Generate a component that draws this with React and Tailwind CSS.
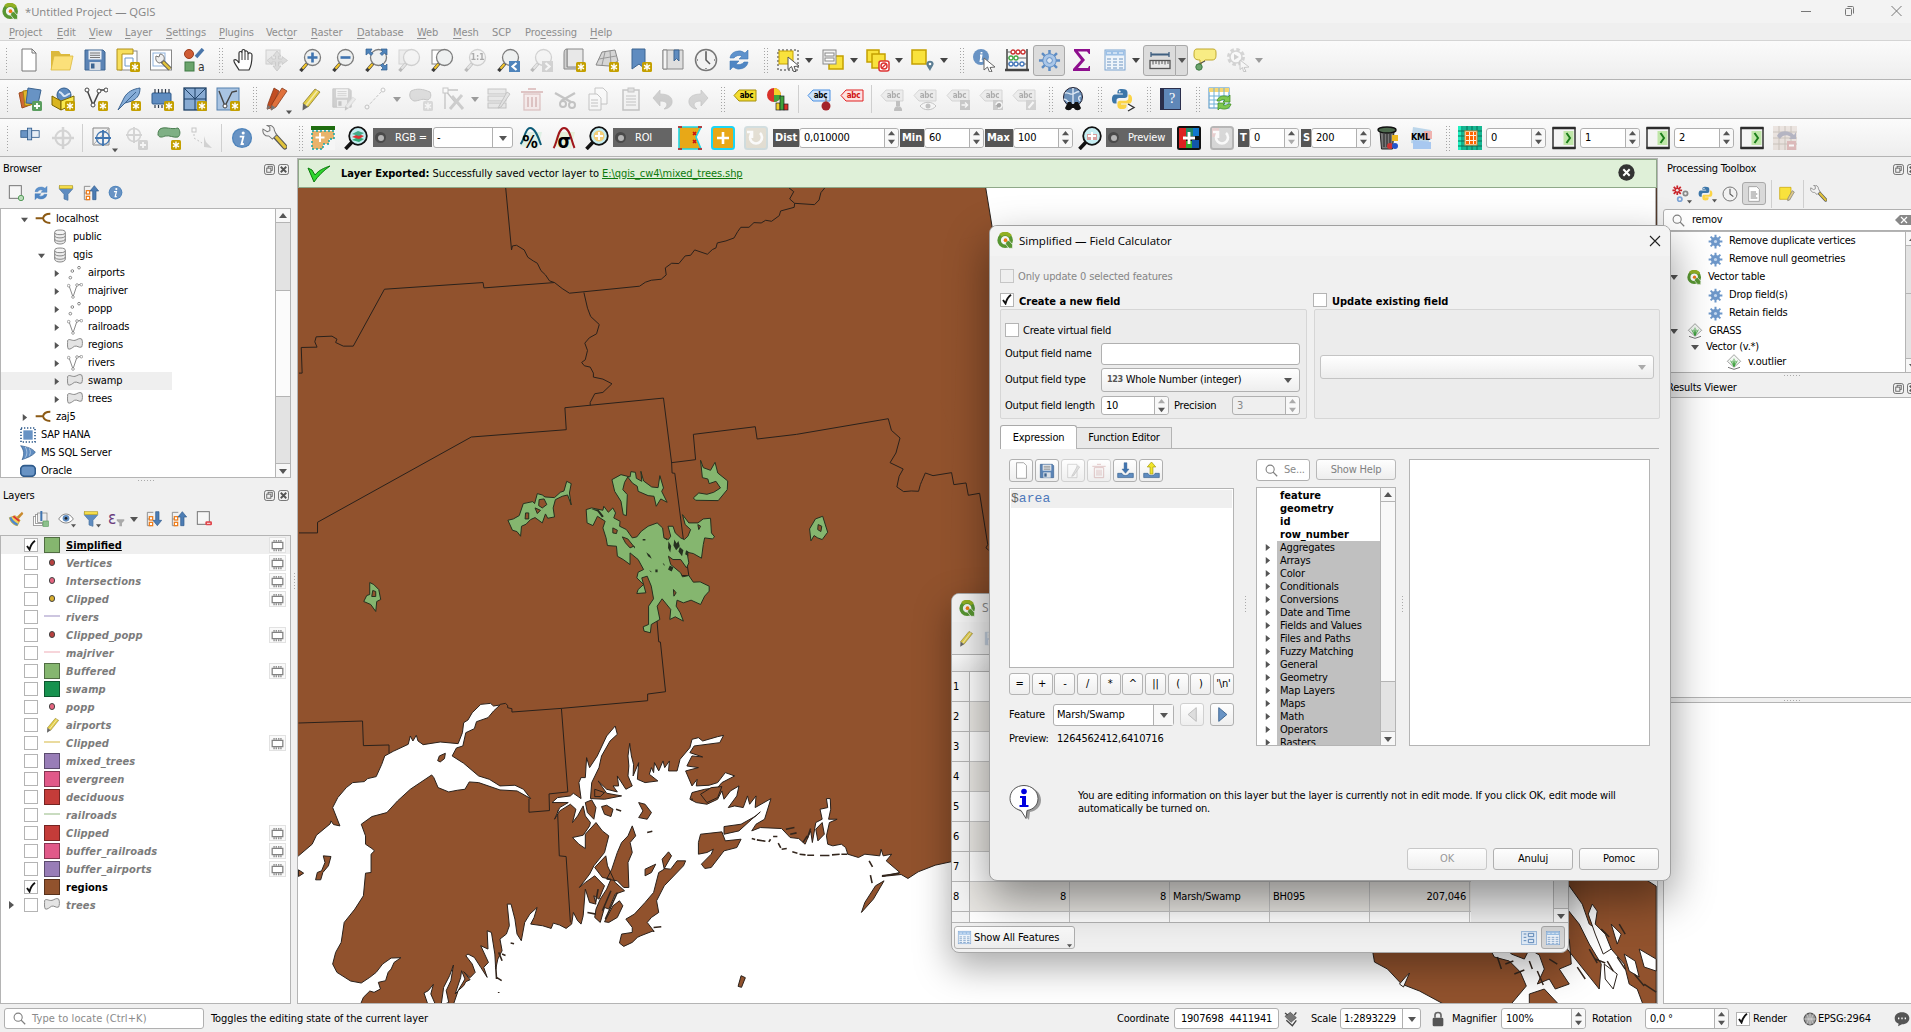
import React from "react";

/* ---------- primitives ---------- */
const Tri = ({ d = "down", c = "#555", s = 8 }) => {
  const p = { down: "0,2 8,2 4,7", up: "0,6 8,6 4,1", right: "2,0 7,4 2,8", left: "6,0 1,4 6,8" }[d];
  return <svg width={s} height={s} viewBox="0 0 8 8" className="shrink-0"><polygon points={p} fill={c} /></svg>;
};

const I = ({ children, s = 24, className = "" }) => (
  <svg width={s} height={s} viewBox="0 0 24 24" fill="none" className={"shrink-0 " + className}>{children}</svg>
);

const Cell = ({ children, off, menu }) => (
  <div className={"relative flex h-[31px] w-[33px] shrink-0 items-center justify-center " + (off ? "opacity-30 grayscale" : "")}>
    {children}
    {menu && <span className="absolute bottom-0 right-[1px]"><Tri s={6} /></span>}
  </div>
);
const Arr = ({ off }) => <div className={"flex w-3 shrink-0 items-center pl-[1px] " + (off ? "opacity-50" : "")}><Tri c="#444" /></div>;
const Handle = ({ w = "w-4" }) => (
  <div className={"flex shrink-0 justify-center pl-1 " + w}>
    <div className="h-[26px] w-[5px] bg-[radial-gradient(#a5a5a5_0.8px,transparent_1px)] bg-[length:3px_3px]" />
  </div>
);
const Sep = ({ w = "w-[7px]" }) => <div className={"flex shrink-0 justify-center " + w}><div className="h-[28px] w-px bg-[#cfcfcf]" /></div>;
const Dots = ({ v }) => <div className={(v ? "h-[18px] w-[3px]" : "h-[3px] w-[18px]") + " bg-[radial-gradient(#aaa_0.8px,transparent_1px)] bg-[length:3px_3px]"} />;

const Star = () => <g><rect x="14" y="14" width="10" height="10" rx="1.5" fill="#c4a000" /><path d="M19 15.5v7M16 17.2l6 3.6M22 17.2l-6 3.6" stroke="#fff" strokeWidth="1.4" /></g>;
const Plus = ({ c = "#5a9e5f" }) => <g><rect x="14" y="14" width="10" height="10" rx="1.5" fill={c} /><path d="M19 16v6M16 19h6" stroke="#fff" strokeWidth="1.8" /></g>;
const Mag = ({ children, fill = "#eef0f0" }) => (
  <g><path d="M9 15.5L2.5 23" stroke="#3c3c3c" strokeWidth="3.4" /><path d="M8.5 16L4.5 20.6" stroke="#f2c62e" strokeWidth="2.2" />
    <circle cx="14.5" cy="9.5" r="8" fill={fill} stroke="#7c7c7c" strokeWidth="1.3" />{children}</g>
);
const MagB = ({ children }) => (
  <g><path d="M9 15L1.5 23" stroke="#111" strokeWidth="3.6" /><circle cx="14" cy="10" r="8.8" fill="#c5edf2" stroke="#111" strokeWidth="1.8" />{children}</g>
);
const Q = ({ s = 16 }) => (
  <I s={s}><circle cx="11.5" cy="11.5" r="8.5" stroke="#589632" strokeWidth="5" /><path d="M5 5a9 9 0 0 1 14 1" stroke="#93b023" strokeWidth="5" /><path d="M13 13l4-1 5 6v5h-5l-5-6z" fill="#589632" stroke="#f3f3f3" strokeWidth="1" /><circle cx="12" cy="11.5" r="2.6" fill="#ee7913" /></I>
);
const Gear = ({ c = "#6d97c9", s = 24, hole = "#e8eef5", r = 3 }) => (
  <I s={s}><path d="M12 1v22M1 12h22M4.2 4.2l15.6 15.6M19.8 4.2L4.2 19.8" stroke={c} strokeWidth="3.2" /><circle cx="12" cy="12" r="7.4" fill={c} /><circle cx="12" cy="12" r={r} fill={hole} /></I>
);
const Refresh = ({ s = 24 }) => (
  <I s={s}><path d="M3 10a9 8 0 0 1 15-5l3-3v9h-9l3-3a6 5 0 0 0-8 2z" fill="#5e92cc" stroke="#4179b5" strokeWidth=".6" /><path d="M21 14a9 8 0 0 1-15 5l-3 3v-9h9l-3 3a6 5 0 0 0 8-2z" fill="#4f86c4" stroke="#4179b5" strokeWidth=".6" /></I>
);
const Info = ({ s = 24 }) => <I s={s}><circle cx="12" cy="12" r="11" fill="#4f84bb" /><circle cx="12" cy="12" r="9.6" fill="#6893c4" /><circle cx="13.3" cy="6.5" r="1.7" fill="#fff" /><path d="M9.5 10.5h4l-2 8h2.5" stroke="#fff" strokeWidth="2" /></I>;
const Wrench = ({ s = 24 }) => <I s={s}><path d="M11 9l11 12" stroke="#555" strokeWidth="5" strokeLinecap="round" /><path d="M14 12l8 9" stroke="#e0c23c" strokeWidth="3" strokeLinecap="round" /><path d="M1 4l4 2.500 2.500-1L7.500 2 5 .5c4-1 7 1.500 7 5l2 4-4 4-3.500-3C3 11 0 8 1 4z" fill="#f2f2f2" stroke="#777" strokeWidth="1" /></I>;
const Python = ({ s = 24 }) => <I s={s}><path d="M12 1c-5 0-5 2-5 5h6v1H4c-4 0-4 10 0 10h2v-3c0-2 1-3 3-3h6c2 0 3-1 3-3V5c0-3-2-4-6-4z" fill="#3c76a9" /><path d="M12 23c5 0 5-2 5-5h-6v-1h9c4 0 4-10 0-10h-1v4c0 2-1 3-3 3h-6c-2 0-3 1-3 3v2c0 3 2 4 5 4z" fill="#fbd446" /><circle cx="9.500" cy="3.800" r="1" fill="#fff" /></I>;
const Funnel = ({ s = 16 }) => <I s={s}><path d="M2 2h20v4l-7 8v9l-6-2v-7L2 6z" fill="#5f8cc0" stroke="#4a729f" /><rect x="2" y="1" width="20" height="4.500" fill="#f4dc4a" stroke="#b79c1a" strokeWidth=".8" /></I>;
const TreeArrow = ({ up }) => (
  <I s={16}><path d="M2 2h9M2 2v20h6M2 12h6" stroke="#8a8a8a" strokeWidth="1.400" /><rect x="5" y="8.500" width="5" height="5" fill="#fff" stroke="#ee7913" strokeWidth="1.800" /><rect x="5" y="17" width="5" height="5" fill="#fff" stroke="#ee7913" strokeWidth="1.800" />
    {up ? <path d="M17 1l6.500 8h-4v13h-5V9h-4z" fill="#4d7db4" stroke="#2f5b8c" /> : <path d="M17 22l6.500-8h-4V1h-5v13h-4z" fill="#4d7db4" stroke="#2f5b8c" />}</I>
);
const Pencil = ({ c = "#e4cf47", s = 24 }) => <I s={s}><path d="M17 2l5 3L10 20l-5-3.500z" fill={c} stroke="#8a7a30" strokeWidth=".8" /><path d="M5 16.500L10 20l-5.500 3.500z" fill="#666" /><path d="M19.500 3.500L8 18.500" stroke="#fff8" strokeWidth="1.500" /></I>;
const Floppy = ({ s = 24 }) => <I s={s}><path d="M2 2h18l2 2v18H2z" fill="#5a83b5" stroke="#3c6491" /><rect x="5.500" y="2.500" width="13" height="9" fill="#e9edf2" /><path d="M7 5h10M7 7.300h10M7 9.500h10" stroke="#777" strokeWidth="1" /><rect x="6.500" y="14" width="11" height="8" fill="#d9dee5" /><rect x="8" y="15.500" width="3.500" height="5" fill="#3c6491" /></I>;
const TableIc = ({ s = 24 }) => <I s={s}><rect x="2" y="2" width="20" height="20" fill="#eef4fa" stroke="#7ba3d0" /><rect x="2.500" y="2.500" width="19" height="5" fill="#9cc0e6" /><path d="M4 5h4M10 5h4M16 5h4" stroke="#fff" /><path d="M4 11h4M10 11h4M16 11h4M4 14h4M10 14h4M16 14h4M4 17h4M10 17h4M16 17h4M4 20h4M10 20h4M16 20h4" stroke="#6f96c2" strokeWidth="1.200" /></I>;
const Tag = ({ fill = "#f4dd2f", st = "#a58f0c", tc = "#222", children }) => (
  <div className="relative flex h-6 w-6 items-start justify-center">
    <svg width="24" height="24" viewBox="0 0 24 24" className="absolute left-0 top-0"><path d="M1 8.500L6 3h17v11H6z" fill={fill} stroke={st} />{children}</svg>
    <span className={"relative mt-[3px] pl-1 text-[8px] font-bold leading-[11px] " + tc}>abc</span>
  </div>
);
const Temp = () => <I s={15}><rect x="3.500" y="7" width="17" height="10" fill="#fff" stroke="#828282" strokeWidth="2" /><path d="M6.500 3v3M10 3v3M14 3v3M17.500 3v3M6.500 18v3M10 18v3M14 18v3M17.500 18v3" stroke="#828282" strokeWidth="2" /></I>;
const Poly = ({ s = 16 }) => <I s={s}><path d="M1 5c3-3 6 1 11 0 4-1 6-4 10-2 2 4 1 10 0 12-4 2-7-3-11-1-3 2-6 5-9 4-2-3-1-9-1-13z" fill="#e4e4e4" stroke="#8a8a8a" strokeWidth="1.500" /></I>;
const Line = ({ s = 16 }) => <I s={s}><path d="M3 4l6 17L15 3l7-1" stroke="#777" strokeWidth="1.300" /><circle cx="2.500" cy="4" r="2" fill="#fff" stroke="#777" /><circle cx="9" cy="21" r="2" fill="#fff" stroke="#777" /><circle cx="15" cy="3" r="2" fill="#fff" stroke="#777" /><circle cx="21.500" cy="2.500" r="2" fill="#fff" stroke="#777" /></I>;
const Pts = () => <I s={16}><circle cx="5" cy="19" r="2" stroke="#777" strokeWidth="1.300" /><circle cx="8" cy="9" r="2" stroke="#777" strokeWidth="1.300" /><circle cx="18" cy="4" r="2" stroke="#777" strokeWidth="1.300" /></I>;
const Db = () => <I s={16}><path d="M4 5v13c0 6 16 6 16 0V5" fill="#ececec" stroke="#888" strokeWidth="1.500" /><ellipse cx="12" cy="5" rx="8" ry="3.500" fill="#f4f4f4" stroke="#888" strokeWidth="1.500" /><path d="M4 10c0 4.500 16 4.500 16 0M4 15c0 4.500 16 4.500 16 0" stroke="#888" strokeWidth="1.500" /></I>;
const Conn = () => <I s={16}><path d="M1 11h10M23 4c-7 0-10 2-11 7 1 4 4 7 11 7" stroke="#8c5a14" strokeWidth="3" /></I>;
const Loupe = ({ s = 14 }) => <I s={s}><circle cx="9.500" cy="9.500" r="7.500" stroke="#808080" strokeWidth="2" /><path d="M15 15l7.500 7.500" stroke="#808080" strokeWidth="2.400" /></I>;
const Grass = () => <I s={16}><path d="M12 1l10 10-10 9L2 11z" fill="#f3f7f3" stroke="#777" /><path d="M12 19V7M12 19L7 10M12 19l5-9M12 18l-2-8M12 18l2-8" stroke="#2f9a2f" strokeWidth="1.200" /><path d="M3 20l9 3 9-3" stroke="#777" strokeWidth="1.500" /></I>;

const Check = ({ on, off }) => (
  <span className={"flex h-[14px] w-[14px] shrink-0 items-center justify-center border " + (off ? "border-[#c6c6c6] bg-[#efefef]" : "border-[#b4b4b4] bg-white")}>
    {on && <svg width="10" height="11" viewBox="0 0 10 11"><path d="M1 6l2.500 3.500C4.500 6 6 3 9 .8" fill="none" stroke="#111" strokeWidth="1.900" /></svg>}
  </span>
);
const Spin = ({ v, w, h = "h-5", off, upOff, downOff }) => (
  <div className={`flex shrink-0 rounded-[3px] border border-[#b0b0b0] ${off ? "bg-[#efefef] text-[#888]" : "bg-white"} ${h} ${w}`}>
    <span className="flex flex-1 items-center pl-1">{v}</span>
    <span className="flex w-[14px] flex-col items-center justify-center gap-[1px] rounded-r-[3px] border-l border-[#b0b0b0] bg-[#f8f8f8]">
      <Tri d="up" s={7} c={off || upOff ? "#aaa" : "#555"} /><Tri s={7} c={off || downOff ? "#aaa" : "#555"} />
    </span>
  </div>
);
const FloatClose = () => (
  <div className="flex shrink-0 gap-[3px]">
    <I s={11}><rect x="1" y="1" width="22" height="22" rx="5" stroke="#666" strokeWidth="2" /><rect x="9" y="5" width="9" height="9" stroke="#666" strokeWidth="2" /><rect x="6" y="9" width="9" height="9" fill="#efefef" stroke="#666" strokeWidth="2" /></I>
    <I s={11}><rect x="1" y="1" width="22" height="22" rx="5" stroke="#666" strokeWidth="2" /><path d="M6 6l12 12M18 6L6 18" stroke="#555" strokeWidth="4" /></I>
  </div>
);
const DarkLabel = ({ children, w }) => (
  <div className={"flex h-[19px] shrink-0 items-center gap-[9px] bg-[#656565] pl-[2px] text-white " + w}>
    <span className="flex h-[11px] w-[11px] shrink-0 items-center justify-center rounded-full bg-[#4a4a4a]"><span className="h-[6px] w-[6px] rounded-full bg-[#b5b5b5]" /></span>{children}
  </div>
);
const Lab = ({ children, w }) => <div className={"flex h-[18px] shrink-0 items-center bg-[#555] pl-[2px] font-bold tracking-normal text-white " + w}>{children}</div>;
const GreenGo = () => <I><rect x="1" y="2" width="22" height="20" fill="#f4f4f4" stroke="#333" strokeWidth="1.500" /><path d="M.5 2h23M.5 22h23" stroke="#2c2c2c" strokeWidth="2.500" /><rect x="11.500" y="5" width="10" height="14" fill="#bfe6a8" /><path d="M14.500 7l3.500 5-3.500 5" stroke="#1b7e1b" strokeWidth="2" /></I>;

/* ---------- toolbars ---------- */
const BAR = "flex items-center border-b border-[#b4b4b4] bg-gradient-to-b from-[#fbfbfb] to-[#eeeeee]";

function Toolbar1() {
  return (
    <div className={BAR + " h-[39px] pl-1"}>
      <Handle w="w-2 -ml-[3px] mr-[3px]" />
      <Cell><I><path d="M5 1h10l4 4v18H5z" fill="#fff" stroke="#777" /><path d="M15 1v4h4" stroke="#777" /></I></Cell>
      <Cell><I><path d="M1 3h8l2 3h9v16H1z" fill="#dcb93c" /><path d="M4 8h19l-3 14H1z" fill="#fbe07a" stroke="#dcb93c" strokeWidth=".8" /></I></Cell>
      <Cell><Floppy /></Cell>
      <Cell><I><rect x="4" y="3" width="17" height="19" fill="#fff" stroke="#888" /><path d="M1 1h16v5H6v16H1z" fill="#f7df5c" stroke="#b0901a" /><path d="M9 10h8v8H9z" stroke="#6d97c9" /><Star /></I></Cell>
      <Cell><I><rect x="1.500" y="2" width="21" height="20" fill="#fff" stroke="#888" /><rect x="4" y="5" width="12" height="13" stroke="#8fb3dd" /><path d="M12 12l9 9" stroke="#555" strokeWidth="4.500" /><path d="M14 14l7 7" stroke="#e0c23c" strokeWidth="2.500" /><path d="M7 8l3 1 1-3c3 0 5 3 4 6l-4 3c-3 0-5-3-4-7z" fill="#eee" stroke="#777" /></I></Cell>
      <Cell><div className="relative h-6 w-6"><svg width="24" height="24" viewBox="0 0 24 24"><circle cx="7" cy="6" r="4.500" fill="#cf5c35" stroke="#9c3c1b" /><path d="M14 9l7-8" stroke="#4a76aa" strokeWidth="3.500" /><rect x="3" y="14" width="9" height="9" fill="#6aa36b" stroke="#3f7a44" /></svg><span className="absolute bottom-[-2px] right-[1px] text-[12px] leading-[14px] text-[#333]">a</span></div></Cell>
      <Handle w="w-[17px]" />
      <Cell><I><path d="M7 22c-2-4-6-8-5-10 2-1 4 1 5 3V5c0-2 3-2 3 0V3c0-2 3-2 3 0v1c0-2 3-1 3 1v1c1-2 4-1 4 1 0 6 0 10-3 15z" fill="#fff" stroke="#333" strokeWidth="1.200" /><path d="M10 5v7M13 4v8M16 6v6" stroke="#333" /></I></Cell>
      <Cell off><I><rect x="1" y="2" width="14" height="14" fill="#e0d56a" stroke="#777" /><path d="M12 3l4 5h-2.500v3H17V8.500l5.500 4-5.500 4V14h-3.500v4H16l-4 5-4-5h2.500v-4H7v2.500l-5-4 5-4V11h3.500V8H8z" fill="#8ab" stroke="#567" strokeWidth=".8" /></I></Cell>
      <Cell><I><Mag><path d="M14.500 4.500v10M9.500 9.500h10" stroke="#3f74b0" strokeWidth="2.600" /></Mag></I></Cell>
      <Cell><I><Mag><path d="M9.500 9.500h10" stroke="#3f74b0" strokeWidth="2.600" /></Mag></I></Cell>
      <Cell><I><Mag /><path d="M2 1h6L6.500 3.500l2.500 2-2 2-2.500-2.500L2 7zM23 1v6l-2.500-2L18 7.500l-2-2 2.500-2L17 1zM23 22h-6l2-2-2.500-2.500 2-2L21 18l2-2z" fill="#4f84bb" stroke="#2f5b8c" strokeWidth=".7" /></I></Cell>
      <Cell off><I><rect x="2" y="2" width="14" height="14" fill="#e6dc80" stroke="#888" /><Mag /></I></Cell>
      <Cell><I><rect x="2" y="2" width="14" height="14" fill="#fff" stroke="#888" /><Mag /></I></Cell>
      <Cell off><div className="relative h-6 w-6"><I><Mag /></I><span className="absolute left-[8px] top-[3px] text-[9px] font-bold leading-3">1:1</span></div></Cell>
      <Cell><I><Mag /><rect x="13" y="13" width="11" height="11" fill="#4f84bb" /><path d="M20.500 15l-4 3.500 4 3.500" stroke="#fff" strokeWidth="2.200" /></I></Cell>
      <Cell off><I><Mag /><rect x="13" y="13" width="11" height="11" fill="#888" /><path d="M16.500 15l4 3.500-4 3.500" stroke="#fff" strokeWidth="2.200" /></I></Cell>
      <Cell><I><path d="M5 1h16v19H5z" fill="#e8e8e8" stroke="#888" /><path d="M5 1C2 1 2 4 2 7v14h14v-2H5z" fill="#cfcfcf" stroke="#888" /><Star /></I></Cell>
      <Cell><I><path d="M1 17L7 4l13-2 3 11-9 5z" fill="#d5d5d5" stroke="#888" /><path d="M4 11l17-3M10 4L7 17M15 3l1 13" stroke="#999" /><Star /></I></Cell>
      <Cell><I><path d="M4 1h13v20l-6-5-7 5z" fill="#5f8cc0" stroke="#3c6491" /><Star /></I></Cell>
      <Cell><I><path d="M2 2h20v19H2z" fill="#dedede" stroke="#888" /><path d="M2 2h4v19H2z" fill="#f4f4f4" stroke="#888" /><path d="M13 2h5v11l-2.500-2.500L13 13z" fill="#5f8cc0" stroke="#3c6491" /></I></Cell>
      <Cell><I><circle cx="12" cy="12" r="10.500" fill="#f2f2f2" stroke="#777" strokeWidth="1.500" /><path d="M12 4v8l4 4" stroke="#555" strokeWidth="1.500" /><path d="M12 3v1M12 20v1M3 12h1M20 12h1" stroke="#777" strokeWidth="1.500" /></I></Cell>
      <Cell><Refresh /></Cell>
      <Handle />
      <Cell><I><rect x="2" y="2" width="20" height="20" stroke="#333" strokeDasharray="2 2" /><rect x="3" y="3" width="14" height="13" fill="#f9e23c" stroke="#c4a000" /><path d="M12 9l11 9-5 .5 2 5-2.500 0-2-5-3.500 3z" fill="#fff" stroke="#555" /></I></Cell><Arr />
      <Cell><I><rect x="8" y="8" width="14" height="13" fill="#f9e23c" stroke="#c4a000" strokeWidth="1.500" /><rect x="2" y="2" width="13" height="14" fill="#f3f3f3" stroke="#888" /><rect x="4" y="5" width="9" height="3" fill="#fff" stroke="#888" /><rect x="4" y="10" width="9" height="3" fill="#fff" stroke="#888" /></I></Cell><Arr />
      <Cell><I><rect x="1" y="2" width="12" height="12" fill="#f9e23c" stroke="#c4a000" strokeWidth="1.500" /><rect x="6" y="6" width="13" height="14" fill="#f9e23c" stroke="#c4a000" strokeWidth="1.500" /><rect x="13" y="13" width="10" height="10" rx="2" fill="#fff" stroke="#d33" strokeWidth="1.500" /><circle cx="18" cy="18" r="3" stroke="#d33" strokeWidth="1.500" /><path d="M16 20l4-4" stroke="#d33" strokeWidth="1.500" /></I></Cell><Arr />
      <Cell><I><rect x="1" y="2" width="14" height="14" fill="#f9e23c" stroke="#c4a000" strokeWidth="1.500" /><path d="M19 23c-3-5-4-6-3.500-8 1-3 6-3 7 0 .5 2-1 3-3.500 8z" fill="#5b7d93" /><circle cx="19" cy="16" r="1.300" fill="#fff" /></I></Cell><Arr />
      <Handle />
      <Cell><I><circle cx="9" cy="9" r="8" fill="#6893c4" /><path d="M9.500 4v1.500M8 7.500h1.500L8.500 13h2" stroke="#fff" strokeWidth="1.800" /><path d="M12 10l11 9-5 .5 2 4-2.500.5-2-5-3.500 3z" fill="#fff" stroke="#666" /></I></Cell>
      <Cell><I><path d="M2 1v21M22 1v21" stroke="#444" strokeWidth="1.500" /><path d="M0 22h24" stroke="#444" strokeWidth="2.500" /><path d="M2 4h20M2 10h20M2 16h20" stroke="#666" strokeWidth="1" /><g fill="#fff" strokeWidth="1.300"><g stroke="#c33"><circle cx="8" cy="4" r="2" /><circle cx="13" cy="4" r="2" /><circle cx="18" cy="4" r="2" /></g><g stroke="#4a4"><circle cx="6" cy="10" r="2" /><circle cx="11" cy="10" r="2" /></g><g stroke="#47b"><circle cx="6" cy="16" r="2" /><circle cx="11" cy="16" r="2" /><circle cx="17" cy="16" r="2" /></g></g></I></Cell>
      <div className="flex h-[31px] w-[32px] shrink-0 items-center justify-center rounded-[3px] border border-[#a9a9a9] bg-[#dcdcdc]"><I s={23}><path d="M12 1v22M1 12h22M4.200 4.200l15.600 15.600M19.800 4.200L4.200 19.800" stroke="#5d8cc4" strokeWidth="2.600" /><circle cx="12" cy="12" r="7" fill="#a9c6e8" stroke="#5d8cc4" /><circle cx="12" cy="12" r="3" fill="#dce6f2" stroke="#5d8cc4" /></I></div>
      <Cell><I><path d="M20 6V1H4v2l7 9-8 9v2h17v-5h-1l-1 2H8l7-8L8 3.500h9l2 2.500z" fill="#8e0f8e" /></I></Cell>
      <Cell><TableIc /></Cell><Arr />
      <div className="flex h-[31px] w-[33px] shrink-0 items-center justify-center rounded-l-[3px] border border-[#a9a9a9] bg-[#dcdcdc]"><I><path d="M3 6.500h18" stroke="#3f5f80" strokeWidth="2" /><path d="M3 4v5M21 4v5" stroke="#3f5f80" strokeWidth="1.300" /><rect x="2" y="12.500" width="20" height="8" fill="#e8e8e8" stroke="#555" strokeWidth="1.300" /><path d="M5 13v3.500M8 13v3M11 13v3.500M14 13v3M17 13v3.500M20 13v3" stroke="#555" /></I></div>
      <div className="flex h-[31px] w-3 shrink-0 items-center justify-center rounded-r-[3px] border border-l-0 border-[#a9a9a9] bg-[#dcdcdc]"><Tri /></div>
      <Cell><I><path d="M4 1h16c3 0 3 2 3 5s0 6-4 6h-7l-5 5V12C2 12 1 10 1 7s0-6 3-6z" fill="#f8ec84" stroke="#c0a82c" /><path d="M4 17l8-4" stroke="#555" strokeWidth="1.200" /><circle cx="6" cy="19" r="3.200" fill="#6aa36b" stroke="#3f7a44" /></I></Cell>
      <Cell off><I><circle cx="10" cy="9" r="7.500" stroke="#888" strokeWidth="3" strokeDasharray="3.500 2.400" /><circle cx="10" cy="9" r="6" fill="#fff" stroke="#888" strokeWidth="1.500" /><path d="M8 6l5 3-5 3z" fill="#777" /><path d="M14 12l9 7-5 .5 2 4-2.500 0-1-4-2.500 2z" fill="#fff" stroke="#666" /></I></Cell><Arr off />
    </div>
  );
}

function Toolbar2() {
  const abcOff = [
    <path key="a" d="M18 14v5M18 21a2 2 0 1 0 .1 0" stroke="#a33" strokeWidth="4" />,
    <g key="b"><path d="M7 19c4-5 12-5 16 0-4 5-12 5-16 0z" fill="#fff" stroke="#555" /><circle cx="15" cy="19" r="2.500" fill="#555" /></g>,
    <g key="c"><rect x="14" y="13" width="10" height="10" fill="#666" /><path d="M15.500 18h6M19 15.500l2.500 2.500-2.500 2.500" stroke="#fff" strokeWidth="1.500" /></g>,
    <g key="d"><rect x="14" y="13" width="10" height="10" fill="#777" /><path d="M19 21a3 3 0 1 0-2-3" stroke="#fff" strokeWidth="1.500" /></g>,
    <g key="e"><rect x="14" y="13" width="10" height="10" fill="#987" /><path d="M21.500 15l-5 6" stroke="#fff" strokeWidth="2" /></g>,
  ];
  return (
    <div className={BAR + " h-[39px] pl-[5px]"}>
      <Handle w="w-2 -ml-[3px] mr-[3px]" />
      <Cell><I><path d="M1 6l10-3 4 14-11 4z" fill="#cf6a35" stroke="#a14a1d" /><path d="M5 4l10-1 1 14-9 2z" fill="#e3b62c" stroke="#a58012" /><path d="M10 1l13 2-3 14-12-1z" fill="#6893c4" stroke="#3c6491" /><Plus /></I></Cell>
      <Cell><I><circle cx="13" cy="8" r="7" fill="#5f8cc0" stroke="#2f5b8c" /><path d="M8 5c3 0 3 3 5 4s4-3 6-2" stroke="#d8e6f5" strokeWidth="2" /><path d="M1 9l9 5v9l-9-5z" fill="#d9b520" stroke="#7b6500" /><path d="M10 14l13-5v8l-13 6z" fill="#f9e94e" stroke="#7b6500" /><Star /></I></Cell>
      <Cell><I><path d="M3 3l6 15L16 3h5" stroke="#444" strokeWidth="1.500" /><g fill="#fff" stroke="#444"><circle cx="3" cy="3" r="2" /><circle cx="9" cy="18" r="2" /><circle cx="15" cy="4" r="2" /><circle cx="22" cy="3" r="2" /></g><Star /></I></Cell>
      <Cell><I><path d="M1 23L7 11C10 5 16 2 23 1c0 6-2 10-8 13l-7 2z" fill="#86add8" stroke="#3c6491" /><path d="M2 22L19 5" stroke="#3c6491" /><Star /></I></Cell>
      <Cell><I><rect x="2" y="6" width="19" height="11" rx="1" fill="#5f8cc0" stroke="#2f5b8c" /><path d="M5 2v4M8.500 2v4M12 2v4M15.500 2v4M19 2v4M5 18v3M8.500 18v3M12 18v3" stroke="#2f3b4c" strokeWidth="1.200" /><Star /></I></Cell>
      <Cell><I><rect x="1" y="1" width="22" height="22" fill="#88abd3" stroke="#1f4166" strokeWidth="1.300" /><path d="M12 1v22M1 12h22M1 1l11 11M23 1L12 12" stroke="#1f4166" /><Star /></I></Cell>
      <Cell><I><rect x="1" y="1" width="22" height="22" fill="#a9c4e2" stroke="#5580ae" /><path d="M3 4l6 15L16 5l5-1" stroke="#444" strokeWidth="1.400" /><circle cx="9" cy="19" r="2" fill="#fff" stroke="#444" /><Star /></I></Cell>
      <Handle />
      <Cell menu><I><path d="M9 1l5 3L6 21l-4 1 1-5z" fill="#c24e22" stroke="#7c2c0d" strokeWidth=".7" /><path d="M17 1l5 3L11 20l-5 3 1-6z" fill="#e0713c" stroke="#7c2c0d" strokeWidth=".7" /><path d="M2.500 18l3 2-3.500 3zM6.500 18l4 2.500L6 23.500z" fill="#777" /></I></Cell>
      <Cell><Pencil /></Cell>
      <Cell off><div className="relative h-6 w-6"><Floppy s={22} /><span className="absolute bottom-0 right-[-2px]"><Pencil s={15} /></span></div></Cell>
      <Cell off><I><path d="M3 20L19 3" stroke="#555" strokeDasharray="3 1.500" /><circle cx="3" cy="20" r="2" stroke="#555" fill="#fff" /><circle cx="19" cy="3" r="2" stroke="#555" fill="#fff" /></I></Cell><Arr off />
      <Cell off><I><path d="M2 4c6-3 12-2 19 1 2 4 0 8-3 8-6-2-7 1-13 1C0 12 0 7 2 4z" fill="#7fae82" stroke="#555" /><Star /></I></Cell>
      <Cell off><I><path d="M3 22V3h13M3 3l10 12" stroke="#555" strokeWidth="1.300" /><rect x="1" y="1" width="5" height="5" fill="#fff" stroke="#555" /><path d="M8 22L20 8M10 9l11 13" stroke="#777" strokeWidth="3" /></I></Cell><Arr off />
      <Cell off><I><rect x="1" y="2" width="18" height="5" fill="#d8d270" stroke="#555" /><rect x="1" y="9" width="18" height="5" fill="#d8d270" stroke="#555" /><rect x="1" y="16" width="18" height="5" fill="#d8d270" stroke="#555" /><path d="M20 5l3 2-9 13-3 1z" fill="#bbb" stroke="#555" /></I></Cell>
      <div className="flex w-[33px] shrink-0 justify-center opacity-30"><I><rect x="4" y="7" width="16" height="16" fill="#f6d6d6" stroke="#a55" strokeWidth="1.300" /><path d="M1 5h22M8 2h8M8 10v10M12 10v10M16 10v10" stroke="#a55" strokeWidth="2" /></I></div>
      <Cell off><I><path d="M2 6l16 9M22 6L8 14" stroke="#555" strokeWidth="2.500" /><circle cx="19" cy="18" r="3" stroke="#555" strokeWidth="2" /><circle cx="10" cy="17" r="3" stroke="#555" strokeWidth="2" /></I></Cell>
      <Cell off><I><path d="M9 1h8l4 4v12H9z" fill="#fff" stroke="#555" /><path d="M3 7h8l4 4v12H3z" fill="#fff" stroke="#555" /><path d="M5 13h7M5 16h7M5 19h7" stroke="#555" /></I></Cell>
      <Cell off><I><rect x="4" y="3" width="16" height="20" fill="#eee" stroke="#555" strokeWidth="1.500" /><rect x="9" y="1" width="6" height="4" fill="#aaa" stroke="#555" /><path d="M7 9h10M7 12h10M7 15h10M7 18h10" stroke="#555" /></I></Cell>
      <Cell off><I><path d="M8 3v4c8 0 13 3 12 9-1 4-5 6-8 6 4-3 5-8-4-8v5L1 11z" fill="#777" stroke="#555" strokeWidth=".7" /></I></Cell>
      <Cell off><I><path d="M16 3v4C8 7 3 10 4 16c1 4 5 6 8 6-4-3-5-8 4-8v5l7-8z" fill="#7a957a" stroke="#555" strokeWidth=".7" /></I></Cell>
      <Handle w="w-[15px]" />
      <Cell><Tag /></Cell>
      <Cell><I><circle cx="8" cy="8" r="7" fill="#d9312a" /><path d="M8 8V1a7 7 0 0 1 7 7z" fill="#f3cf2a" /><path d="M8 8v7a7 7 0 0 0 7-7z" fill="#3fa33c" /><rect x="10" y="16" width="4" height="7" fill="#f3cf2a" stroke="#222" strokeWidth=".7" /><rect x="14" y="9" width="4" height="14" fill="#3fa33c" stroke="#222" strokeWidth=".7" /><rect x="18" y="17" width="4" height="6" fill="#d9312a" stroke="#222" strokeWidth=".7" /></I></Cell>
      <Sep w="w-2" />
      <Cell><Tag fill="#cfe3fb" st="#4a90e2"><path d="M19 9v8" stroke="#999" strokeWidth="2" /><circle cx="19" cy="19" r="4.500" fill="#a3232b" /></Tag></Cell>
      <Cell><Tag fill="#fde0e0" st="#e02020" tc="text-[#d01010]" /></Cell>
      <Sep />
      {abcOff.map((b, i) => <Cell key={i} off><Tag fill="#ded9a0">{b}</Tag></Cell>)}
      <Handle />
      <Cell><I><circle cx="12" cy="10" r="9.500" fill="#6a8fb8" stroke="#223" /><path d="M4 6c4-1 5 2 8 1s4-3 6-2M3 12c4 1 4 4 6 4M20 9c-3 0-3 3-1 5M12 1v18" stroke="#dbe6f2" strokeWidth="1.400" /><path d="M7 15h3l1 2h2l1-2h3l3 6c-1 3-6 3-7 0h-2c-1 3-6 3-7 0z" fill="#111" /></I></Cell>
      <Handle />
      <Cell><div className="relative"><Python s={22} /><svg width="10" height="10" viewBox="0 0 10 10" className="absolute -bottom-[3px] -right-[3px]"><path d="M2 1l6 3.500L2 8" stroke="#333" strokeWidth="1.400" fill="#fff" /></svg></div></Cell>
      <Handle />
      <Cell><div className="flex h-[22px] w-[21px] items-center justify-center border border-l-4 border-[#2b2f4c] bg-[#5f87b8] font-['Liberation_Serif'] text-[14px] text-white">?</div></Cell>
      <Handle />
      <Cell><I><rect x="1" y="1" width="20" height="20" fill="#fff" stroke="#4a90c2" /><rect x="1" y="1" width="20" height="4" fill="#f7d774" /><path d="M6 1v20M11 1v20M16 1v20M1 9h20M1 13h20M1 17h20" stroke="#6fb1d8" /><path d="M9 14a7 6 0 0 1 11-4l2-2v7h-7l2-2a4 4 0 0 0-5 1zM23 17a7 6 0 0 1-11 4l-2 2v-7h7l-2 2a4 4 0 0 0 5-1z" fill="#7ec850" stroke="#3a8a1a" strokeWidth=".7" /></I></Cell>
    </div>
  );
}

function Toolbar3() {
  return (
    <div className={BAR + " h-[38px] pl-[5px]"}>
      <Handle w="w-2 -ml-[3px] mr-[3px]" />
      <Cell><I s={20} className="-mt-2"><rect x="1" y="8" width="9" height="8" fill="#6893c4" stroke="#2f5b8c" /><rect x="14" y="8" width="9" height="8" fill="#e6edf5" stroke="#2f5b8c" /><rect x="9" y="5" width="5" height="14" fill="#a9c4e2" stroke="#2f5b8c" /></I></Cell>
      <Cell off><I><circle cx="12" cy="12" r="7.500" stroke="#888" strokeWidth="2" /><path d="M12 1v22M1 12h22" stroke="#888" strokeWidth="2.500" /></I></Cell>
      <Sep />
      <Cell menu><I><path d="M2 2h16v17H2z" fill="#f2f2f2" stroke="#888" /><path d="M2 19L18 2" stroke="#aaa" /><circle cx="12" cy="12" r="6.500" stroke="#3f74b0" strokeWidth="1.300" /><path d="M12 4v16M4 12h16" stroke="#3f74b0" strokeWidth="1.800" /></I></Cell>
      <Cell off><I><circle cx="10" cy="9" r="6.500" stroke="#888" strokeWidth="1.500" /><path d="M10 1v16M2 9h16" stroke="#888" strokeWidth="2" /><Plus c="#888" /></I></Cell>
      <Cell><I><path d="M3 3c5-3 11 1 18-1 3 3 2 8 0 9-5 1-8-2-13-1-4 2-6 1-7-1 0-2 0-4 2-6z" fill="#7fb085" stroke="#4a7d50" /><Star /></I></Cell>
      <Cell off><I><path d="M4 4l0 8 8 5" stroke="#555" strokeDasharray="2 2" /><rect x="2" y="2" width="4" height="4" fill="#fff" stroke="#555" /><path d="M14 10l2 6 6 6-8-1z" fill="#888" /></I></Cell>
      <Sep />
      <Cell><Info s={22} /></Cell>
      <Cell><Wrench s={25} /></Cell>
      <Handle w="w-[15px]" />
      <Cell><I><rect x="0" y="0" width="24" height="24" fill="#f5f5f5" /><path d="M0 0h24v4H0z" fill="#1f6d10" /><path d="M1 5h22v8h-5v5h-6v5H1z" fill="#e9b36b" stroke="#17a5a5" strokeDasharray="2 2" strokeWidth="1.500" /><path d="M9 7v9M4.500 11.500h9" stroke="#fff" strokeWidth="2" /></I></Cell>
      <Cell><I><MagB><path d="M8 14l6-3 6 2-5 3z" fill="#3a7" /><path d="M8 11l6-3 6 2-5 3z" fill="#d33" /><path d="M8 8l6-3 6 2-5 3z" fill="#4a8" /></MagB></I></Cell>
      <div className="w-px shrink-0" />
      <DarkLabel w="w-[59px]">RGB =</DarkLabel>
      <div className="ml-[1px] mr-[1px] flex h-[21px] w-[80px] shrink-0 rounded-[3px] border border-[#b0b0b0] bg-white"><span className="flex flex-1 items-center pl-[3px]">-</span><span className="flex w-[20px] items-center justify-center border-l border-[#b0b0b0]"><Tri /></span></div>
      <Cell><div className="relative h-6 w-6"><svg width="24" height="24" viewBox="0 0 24 24"><path d="M1 20l5-14h17l-4 17z" fill="#def0e4" /><path d="M1.500 18C5 15 6 2 11 2s8 8 11 17" fill="none" stroke="#0c5c78" strokeWidth="2" /></svg><span className="absolute left-[4px] top-[9px] text-[17px] font-bold leading-[14px]">%</span></div></Cell>
      <Cell><div className="relative h-6 w-6"><svg width="24" height="24" viewBox="0 0 24 24"><path d="M1 20l5-14h17l-4 17z" fill="#e6f0da" /><path d="M1.500 22C5 18 6 2 12 2s7 12 10.500 20" fill="none" stroke="#a1161c" strokeWidth="2" /></svg><span className="absolute left-[6px] top-[7px] text-[19px] font-bold leading-[16px]">σ</span></div></Cell>
      <Cell><I><MagB><circle cx="14" cy="10" r="5.500" fill="#f3cf7a" /><path d="M14 6v8M10 10h8" stroke="#fff" strokeWidth="2" /></MagB></I></Cell>
      <DarkLabel w="w-[59px]">ROI</DarkLabel>
      <div className="w-px shrink-0" />
      <Cell><I><path d="M1 1h22l-5 10 5 12H1z" fill="#e8a817" stroke="#1bd5e5" strokeWidth="1.600" /><path d="M15 6l3 3M18 6l-3 3M15 14l3 3M18 14l-3 3M0 1h4M0 23h4M20 1h4M20 23h4" stroke="#c11" strokeWidth="1.600" /></I></Cell>
      <Cell><I><rect x="1" y="1" width="22" height="22" rx="2.500" fill="#e8a817" stroke="#1bd5f5" strokeWidth="2" /><path d="M12 6v12M6 12h12" stroke="#fff" strokeWidth="2.600" /></I></Cell>
      <Cell><I className="opacity-60"><rect x="1" y="1" width="22" height="22" rx="2.500" fill="#d8d0bd" stroke="#b9cdd0" strokeWidth="2" /><path d="M8 7a6 6 0 1 0 8 0M8 12V6H3" stroke="#fff" strokeWidth="2.600" /></I></Cell>
      <div className="w-px shrink-0" />
      <Lab w="w-[26px]">Dist</Lab><Spin v="0,010000" w="w-[100px]" />
      <Lab w="w-[24px] ml-[1px]">Min</Lab><Spin v="60" w="w-[60px]" />
      <Lab w="w-[28px] ml-[1px]">Max</Lab><Spin v="100" w="w-[60px]" />
      <Cell><I><MagB><path d="M9 8h10v6H9z" fill="#d8a0a0" /><path d="M14 6v8M10 10h8" stroke="#fff" strokeWidth="2" /></MagB></I></Cell>
      <DarkLabel w="w-[66px]">Preview</DarkLabel>
      <Cell><I><rect x="0" y="0" width="24" height="24" rx="2.500" fill="#111" /><path d="M2 2h7v20H2z" fill="#d22" /><path d="M9 2h7v8H9z" fill="#286" /><path d="M16 2h6v8h-6z" fill="#17c" /><path d="M9 15h6v7H9z" fill="#3a3" /><path d="M15 14h7v8h-7z" fill="#15a" /><path d="M12 6v12M6 12h12" stroke="#fff" strokeWidth="2.800" /></I></Cell>
      <Cell><I className="opacity-50"><rect x="1" y="1" width="22" height="22" rx="2.500" fill="#bbb" stroke="#777" strokeWidth="2" /><path d="M2 2h7v9H2z" fill="#d9a9a9" /><path d="M8 7a6 6 0 1 0 8 0M8 12V6H3" stroke="#fff" strokeWidth="2.600" /></I></Cell>
      <Lab w="w-[11px]">T</Lab><Spin v="0" w="w-[50px]" downOff />
      <Lab w="w-[10px] ml-[2px]">S</Lab><Spin v="200" w="w-[60px]" />
      <Cell><I><path d="M4 5h14l-1.500 18h-11z" fill="#777" stroke="#222" /><path d="M8 8v13M11 8v13M14 8v13" stroke="#333" strokeWidth="1.300" /><ellipse cx="11" cy="4" rx="9" ry="3" fill="#4d6a4d" stroke="#111" strokeWidth="1.500" /><path d="M16 9h6v6h-6z" fill="#edb820" /><circle cx="14" cy="20" r="3" fill="#c33" /><circle cx="19" cy="20" r="3" fill="#25c" /></I></Cell>
      <Cell><div className="relative flex h-6 w-6 items-center justify-center"><svg width="24" height="24" viewBox="0 0 24 24" className="absolute"><path d="M4 1l18 3-3 16-17-3z" fill="#bcd6ea" /><path d="M15 5h8v8h-8z" fill="#efb3b0" /><path d="M4 14l18 2v7H4z" fill="#a8c8f0" /></svg><span className="relative text-[9px] font-bold leading-none">KML</span></div></Cell>
      <Handle w="w-4" />
      <Cell><I><rect width="24" height="24" fill="#16b893" /><path d="M0 0h5v24H0z" fill="#20f0c0" /><path d="M4 0v24M9 0v24M14 0v24M19 0v24M0 5h24M0 10h24M0 15h24M0 20h24" stroke="#0b6d57" strokeWidth="1" /><rect x="7" y="5" width="12" height="14" fill="#fff0e0" stroke="#d94" /><path d="M8 6h3v3H8zM12 6h3v3h-3zM16 6h2v3h-2zM8 10h3v4H8zM12 10h3v4h-3zM16 10h2v4h-2zM8 15h3v3H8zM12 15h3v3h-3zM16 15h2v3h-2z" fill="#f60" /></I></Cell>
      <Spin v="0" w="w-[60px]" /><div className="w-[1px]" /><Cell><GreenGo /></Cell>
      <Spin v="1" w="w-[60px]" /><div className="w-[1px]" /><Cell><GreenGo /></Cell>
      <Spin v="2" w="w-[60px]" /><div className="w-[1px]" /><Cell><GreenGo /></Cell>
      <Cell><I className="opacity-40"><path d="M0 0h24v24H0z" fill="#d9c7bd" /><path d="M0 6h24M0 12h24M0 18h24M6 0v24M12 0v24M18 0v24" stroke="#8a7a6a" /><path d="M4 10c2-6 12-6 17-1l2-3v7h-7l2-2c-4-3-9-2-11 2z" fill="#557" /><rect x="14" y="15" width="9" height="9" fill="#b66" /><path d="M16 19.500h5" stroke="#fff" strokeWidth="2" /></I></Cell>
    </div>
  );
}

/* ---------- map ---------- */
const LINE = { fill: "none", stroke: "#2a211b", strokeWidth: 1, vectorEffect: "non-scaling-stroke" };
const BROWN = { fill: "#91522d", stroke: "#2a211b", strokeWidth: 1, vectorEffect: "non-scaling-stroke" };
const WHITE = { fill: "#ffffff", stroke: "#2a211b", strokeWidth: 1, vectorEffect: "non-scaling-stroke" };
const GREEN = { fill: "#85b66f", stroke: "#26301f", strokeWidth: 1, vectorEffect: "non-scaling-stroke", fillRule: "evenodd" };

function MapCanvas() {
  return (
    <svg width="1359" height="816" viewBox="298 188 1359 816" className="block bg-[#91522d]">
      <path d="M985.600 187L992.300 228V560L960 860H1657V187Z" {...WHITE} />
      <path d="M940 400L990 545V900H940Z" fill="#91522d" />
      <path d="M960 240L992 232V560H950Z" fill="#91522d" />
      <g transform="translate(290 180) scale(.4528 .33333)">
        <path {...LINE} d="M475 23L488 210L490 198L499 196L516 210L524 232L536 243L545 250L553 272L563 285L572 303L583 308L600 326L616 340L771 319L784 307L797 301L819 298L830 285L828 264L842 250L858 251L872 228L884 226L893 210L921 223L932 209L940 204L943 189L962 183L980 174L988 155L995 142L1013 142L1024 128L1040 129L1050 121L1063 124L1080 107L1083 93L1113 82L1114 70L1103 57L1112 35L1101 23M1114 70L1158 74L1168 60L1172 38L1181 23" />
        <path {...LINE} d="M18 580H25L23 503L58 502L53 486L56 471L91 469L102 478L99 488L116 499H138L207 328L425 308L427 324L583 308" />
        <path {...LINE} d="M648 338L656 385L663 410L682 434L676 462L660 474L650 490L656 512L651 540L643 548L649 558L662 562L669 580L669 592L690 598L710 612L690 638L672 642L662 668V677" />
        <path {...LINE} d="M18 1060H59V1028L399 772L609 750L606 684L824 655L842 850L843 880L849 881L868 1080L880 1188L862 1188M842 849L895 840L890 764L1027 741L1031 778L1118 764L1321 717L1328 752L1347 775L1338 820L1325 849L1354 868L1345 890L1340 922L1355 936L1372 934L1388 935L1392 915L1395 905L1403 880L1420 888L1461 879L1466 915L1493 910L1498 947L1523 941L1541 1095L1537 1105L1543 1112" />
        <path {...GREEN} d="M480 1022L492 1018L505 1008L514 972L535 966L539 972L545 942L556 946L562 952L583 954L596 938L604 934L610 905L620 912L616 940L620 976L612 946L600 950L585 960L580 985L583 1012L568 1016L563 1003L556 1030L540 1014L530 1020L520 1034L510 1040L508 1070L500 1056L490 1052ZM549 960L560 958L566 975L556 985L548 978ZM519 1000L526 1000L526 1018L518 1018ZM540 985L552 992L545 1002Z" />
        <path {...GREEN} d="M710 900L730 885L750 892L752 876L762 878L764 896L776 905L774 875L780 904L798 922L812 924L816 888L824 925L820 935L832 968L818 958L808 980L803 950L790 948L768 935L766 920L755 910L745 892L738 908L734 930L744 945L742 1008L735 1005L730 965L716 935Z" />
        <path {...GREEN} d="M906 842L912 864L928 872L938 848L944 880L966 904L965 930L945 963L895 962L890 955L902 940L920 944L935 938L950 925L940 905L925 912L922 898L910 894Z" />
        <path {...GREEN} d="M1147 1048L1160 1018L1176 1010L1187 1058L1175 1080L1165 1075L1157 1068L1150 1084ZM1166 1035L1174 1040L1172 1056L1165 1050Z" />
        <path {...GREEN} d="M653 990L665 985L690 992L692 980L702 998L712 985L718 1000L714 1015L728 1025L727 1040L742 1050L755 1075L765 1072L775 1055L790 1040L810 1030L822 1045L825 1075L835 1080L840 1070L834 1040L845 1040L850 1060L862 1075L870 1080L878 1070L884 1050L872 1035L866 1005L880 1030L900 1030L912 1018L928 1016L930 1060L937 1072L932 1078L915 1075L912 1095L908 1136L890 1122L876 1118L880 1150L875 1165L862 1140L845 1140L835 1130L840 1155L862 1180L866 1192L880 1188L890 1208L905 1207L925 1220L925 1235L915 1250L906 1275L885 1262L868 1270L854 1262L852 1280L861 1300L868 1325L850 1312L838 1320L840 1290L821 1258L810 1280L816 1320L797 1335L795 1360L781 1355L779 1342L791 1335L791 1280L802 1258L797 1220L788 1190L776 1195L785 1240L765 1242L768 1230L780 1215L765 1195L768 1178L780 1170L768 1140L750 1120L750 1155L735 1140L722 1130L720 1100L700 1098L697 1075L690 1045L695 1025L678 1010L668 1038L655 1030ZM712 1045L722 1052L720 1062L712 1060ZM733 1072L745 1078L758 1100L750 1105L740 1090ZM900 1035L906 1040L902 1050ZM846 1230L852 1240L847 1250Z" />
        <g fill="#26301f"><path d="M778 1078h6v5h-6zM786 1118l8 8 4 12-8-8zM755 1098l6 3v6zM806 1170h5v8h-5zM835 1085l6 14-2 20-5-14zM848 1080l5 12 4-8 3 16-8 12-6-14zM860 1102l8 10-3 18-8-14zM838 1158l8 6-4 12-8-6zM874 1112l5 4v14l-7-6zM792 1172l5 3v4zM822 1150l4 4v6zM826 1076l6 2v5zM664 988l16 2 12 20-4 4-10-18z" /></g>
      </g>
      <path {...GREEN} d="M369 583L373 585L378 590L380 600L376 602L375 612L370 605L363 602L366 596L369 595ZM372 591L375 592L375 597L371 597Z" />
      <g transform="translate(290 590) scale(.4273 .33333)">
        <path {...LINE} d="M18 401L168 395L170 469L230 467V491M858 95L862 157L866 158L878 307L836 314V334L634 357L518 368V358L508 355V348L503 342L490 345M634 357L649 608L605 614L606 664L558 669V628M625 664L629 800L645 802L655 1000" />
        <path {...WHITE} d="M10 800L18 800L50 765L60 738L92 704L94 695L100 706L115 710L98 655L110 625L130 595L145 580L172 577L180 568L200 562L213 525L220 500L240 486L275 465L280 440L286 455L294 438L298 455L310 466L350 458L392 463L402 430L405 400L415 392L425 370L445 345L468 342L475 350L490 347L475 365L462 385L435 397L430 418L410 430L403 470L388 476L378 500L405 522L440 560L465 570L490 590L525 588L545 600L562 628L530 605L490 602L440 580L418 578L408 600L390 603L370 608L345 595L335 565L330 557L280 600L250 635L225 670L190 682L165 705L175 740L175 765L190 778L196 785L188 795L188 850L175 852L170 920L150 960L125 1000L118 1060L105 1090L98 1125L108 1150L140 1176L165 1182L185 1165L200 1150L215 1125L235 1107L258 1106L242 1120L235 1140L228 1150L222 1175L205 1180L210 1200L195 1210L185 1206L170 1225L162 1250L10 1250Z" />
        <path {...BROWN} d="M76 800L94 802L88 830L75 850L70 872L58 872L62 850L72 845L80 820ZM18 842L30 852L18 862ZM348 500L362 492L360 508L350 518L344 514Z" />
        <path {...WHITE} d="M380 1250L392 1205L405 1190L410 1178L420 1172L405 1148L420 1166L432 1150L425 1125L410 1100L415 1095L430 1105L445 1135L460 1165L452 1135L463 1120L445 1070L462 1080L460 1025L470 1030L478 1095L480 1140L485 1110L495 1085L490 1050L505 1035L512 1010L507 945L516 945L525 990L530 1035L540 1055L548 1000L560 975L577 955L570 985L562 1005L590 1010L610 1018L615 1002L630 1008L645 1018L658 1005L662 970L672 995L680 1005L685 980L690 900L700 940L715 945L710 920L722 930L735 890L712 860L690 880L676 895L700 855L710 830L735 790L745 740L730 725L715 700L690 735L690 778L675 765L660 745L685 738L700 710L702 700L690 680L685 650L672 680L660 700L668 660L655 645L630 665L618 690L630 655L650 640L612 640L625 625L655 620L662 612L680 628L675 580L680 565L690 565L693 505L700 535L718 500L740 440L760 410L765 435L748 455L728 500L722 535L705 580L702 628L735 630L775 620L740 612L720 575L740 600L765 608L755 590L768 590L765 560L785 600L800 590L790 560L792 530L790 500L794 462L798 500L803 525L802 560L815 520L812 570L830 580L860 575L840 555L845 535L850 550L852 520L862 545L872 515L876 535L887 515L885 545L905 545L912 510L935 475L940 450L955 445L965 455L1000 442L1014 438L1005 460L945 470L935 490L965 503L940 500L928 530L955 535L925 545L930 560L940 590L952 570L950 590L980 588L1000 580L1018 550L1040 560L1010 580L1000 595L970 600L940 610L935 630L950 640L975 645L1000 630L1010 605L1015 630L1030 605L1050 590L1045 620L1025 655L1040 650L1060 655L1070 620L1075 645L1090 620L1088 655L1125 628L1110 690L1090 705L1080 725L1100 715L1150 718L1170 745L1190 748L1205 765L1218 725L1222 760L1230 700L1245 690L1240 660L1258 655L1255 628L1264 628L1265 660L1260 690L1280 690L1262 700L1255 740L1258 765L1270 770L1290 765L1300 775L1305 795L1330 805L1345 795L1380 800L1383 780L1388 800L1408 795L1395 815L1427 850L1385 862L1430 856L1446 868L1470 848L1510 828L1568 812L3210 812V1250Z" />
        <path {...BROWN} d="M770 1062L780 1072L800 1060L812 1045L820 1040L850 1025L835 1000L845 985L862 970L857 935L875 890L920 830L925 815L905 815L890 840L875 838L892 800L885 788L870 810L875 840L862 850L850 910L830 940L805 975L785 990L800 1015L800 1030L775 1035ZM960 735L1010 728L1018 755L1055 750L1045 775L1015 785L985 835L970 838L962 825L985 795L990 780L975 790L955 795L955 760ZM1015 712L1055 705L1090 680L1100 668L1080 690L1050 725L1015 735ZM1337 970L1345 940L1370 890L1390 875L1365 930ZM740 870L752 840L765 790L775 760L790 740L800 710L808 740L795 760L800 790L790 820L792 895L780 895L765 875ZM715 960L725 930L740 900L750 870L730 865L712 835L738 800L742 830L760 880L782 905L760 915L745 960L735 955L725 1000L712 985ZM735 998L755 950L770 935L778 950L765 985L745 1000ZM690 640L705 632L715 655L710 690L695 670ZM728 652L740 648L755 660L750 682L735 675ZM815 640L830 645L845 670L835 690L815 685L825 665ZM830 840L855 825L845 850L830 860ZM960 615L985 595L1010 592L1000 625L975 640ZM712 600L735 610L725 622L712 622ZM1055 1160L1065 1166L1056 1195L1048 1192ZM1230 720L1245 700L1250 735L1235 755Z" />
        <path {...WHITE} d="M312 1212L322 1205L334 1186L328 1215L340 1250H322ZM352 1250L358 1195L372 1160L381 1128L375 1175L364 1205L370 1240ZM385 1215L398 1165L400 1145L408 1170L392 1205Z" />
        <path d="M1080 748l8 3M1092 752l20 4M1120 758l4-8M1130 742h10M1142 762l6 14M1150 780l12-2M1175 788l12 4M1192 795l14 2M1210 798h16M1240 799h22M1268 797l18-2M1290 795h14M1355 815l8 18M1358 858l4 24M1385 860l40-7M835 730l12-4M850 1015l18-2M850 1025v4M515 1062l8 2M487 1090l8 25M482 1165l12 10M487 1209v3M762 660l12 5M480 1130l2 40M495 1095l8 4M940 628v5M1160 720l20-5M1170 735l15-4M1210 748l8-30M1200 760l10-20M695 970l20 5M720 900l-6 40M750 905l-20 60M765 910l-28 80" fill="none" stroke="#33261d" strokeWidth="1.600" vectorEffect="non-scaling-stroke" />
      </g>
      {/* eastern shore */}
      <path {...BROWN} d="M1371 940L1375 963L1388 970L1402 985L1420 992L1446 1006H1511L1527 987L1521 973L1510 962L1495 958L1485 940Z" />
      <path {...BROWN} d="M1500 940L1512 955L1525 960L1530 950L1540 956L1545 970L1538 985L1550 980L1556 990L1570 985L1560 970L1572 965L1570 940ZM1560 870H1630L1657 887V1006H1644L1638 990L1630 985L1625 965L1612 950L1605 935L1590 925L1583 905L1568 884ZM1568 910L1580 925L1590 945L1602 965L1600 990L1588 975L1576 960L1568 950ZM1530 995L1545 990L1560 1006H1530Z" />
      <path {...WHITE} d="M1589 915L1593 905L1598 912L1596 925L1606 935L1612 950L1604 955L1596 935ZM1612 925L1622 935L1618 945ZM1640 950L1657 960V972L1645 968ZM1605 965L1618 975L1614 990L1606 980ZM1400 985L1406 978L1410 974L1404 988ZM1625 955L1636 962L1640 978L1630 972Z" />
      <path d="M1498 958l4 12M1506 965l8-3M1515 975l10-4M1530 962l3 8M1550 960l8 5M1590 950l8 14M1596 960l10 4M1578 968l8 12M1608 962l6 10M1618 958l8 12M1635 975l10 12M1645 985l12 8M1538 972l6 14M1602 930l8 8M1620 925l6 10" fill="none" stroke="#33261d" strokeWidth="1.500" />
    </svg>
  );
}

/* ---------- docks ---------- */
const BROWSE = [
  ["localhost", "pl-[20px]", "down", <Conn key="i" />],
  ["public", "pl-[37px]", "", <Db key="i" />],
  ["qgis", "pl-[37px]", "down", <Db key="i" />],
  ["airports", "pl-[52px]", "right", <Pts key="i" />],
  ["majriver", "pl-[52px]", "right", <Line key="i" />],
  ["popp", "pl-[52px]", "right", <Pts key="i" />],
  ["railroads", "pl-[52px]", "right", <Line key="i" />],
  ["regions", "pl-[52px]", "right", <Poly key="i" />],
  ["rivers", "pl-[52px]", "right", <Line key="i" />],
  ["swamp", "pl-[52px]", "right", <Poly key="i" />],
  ["trees", "pl-[52px]", "right", <Poly key="i" />],
  ["zaj5", "pl-[20px]", "right", <Conn key="i" />],
  ["SAP HANA", "pl-[5px]", "", <I key="i" s={16}><rect x="5" y="5" width="14" height="14" fill="#6893c4" /><rect x="1.500" y="1.500" width="21" height="21" stroke="#2f5b8c" strokeWidth="2.500" strokeDasharray="2 2.500" /></I>],
  ["MS SQL Server", "pl-[5px]", "", <I key="i" s={16}><path d="M1 1c10 2 18 4 22 10-5 6-12 8-20 11 4-8 3-14-2-21z" fill="#5f8cc0" stroke="#2f5b8c" /><path d="M8 3c3 6 3 11 0 16M14 5c2 4 2 8 0 11" stroke="#cfe0f2" /></I>],
  ["Oracle", "pl-[5px]", "", <I key="i" s={16}><rect x="1" y="4" width="22" height="16" rx="6" fill="#6893c4" stroke="#2f5b8c" strokeWidth="2.500" /></I>],
];

function VScroll({ thumb }) {
  return (
    <div className="flex w-[15px] shrink-0 flex-col border-l border-[#b4b4b4] bg-[#e3e3e3]">
      <div className="flex h-[14px] shrink-0 items-center justify-center border-b border-[#b4b4b4] bg-[#f7f7f7]"><Tri d="up" s={8} /></div>
      <div className="flex-1">{thumb}</div>
      <div className="flex h-[14px] shrink-0 items-center justify-center border-t border-[#b4b4b4] bg-[#f7f7f7]"><Tri s={8} /></div>
    </div>
  );
}

function Browser() {
  return (
    <div className="flex h-[321px] shrink-0 flex-col">
      <div className="flex h-[22px] items-center justify-between pl-[3px] pr-[2px]"><span>Browser</span><FloatClose /></div>
      <div className="flex h-[28px] items-center gap-[9px] pb-[3px] pl-[8px]">
        <I s={16}><rect x="2" y="1" width="18" height="19" fill="#f6f6f6" stroke="#777" strokeWidth="1.500" /><circle cx="19.500" cy="19.500" r="4" fill="#b9dcb9" stroke="#5a9e5f" strokeWidth="1.500" /></I>
        <Refresh s={16} /><Funnel /><TreeArrow up /><Info s={15} />
      </div>
      <div className="flex h-[270px] border border-l border-[#b4b4b4] bg-white">
        <div className="flex-1 overflow-hidden pt-px">
          {BROWSE.map(([n, pl, a, ic]) => (
            <div key={n} className={"flex h-[18px] w-[171px] items-center " + pl + (n === "swamp" ? " bg-[#efefef]" : "")}>
              <span className="mr-[7px] flex w-[7px] shrink-0 justify-center">{a ? <Tri d={a} s={7} /> : null}</span>
              {ic}<span className="ml-[5px] whitespace-nowrap">{n}</span>
            </div>
          ))}
        </div>
        <VScroll thumb={<div className="flex h-full flex-col"><div className="h-[67px]" /><div className="h-[107px] border-y border-[#b4b4b4] bg-[#fbfbfb]" /></div>} />
      </div>
    </div>
  );
}

const sw = (c) => <span className={"h-4 w-4 border border-black/40 " + c} />;
const dot = (c) => <span className={"mx-[5px] mb-[2px] h-[7px] w-[7px] rounded-full border border-[#444] " + c} />;
const ln = (c) => <span className={"mb-[2px] h-[2px] w-4 " + c} />;
const LAYERS = [
  ["Simplified", sw("bg-[#85b66f]"), 1, 1], ["Vertices", dot("bg-[#b8413f]"), 1], ["Intersections", dot("bg-[#e5647f]"), 1],
  ["Clipped", dot("bg-[#d8ae2e]"), 1], ["rivers", ln("bg-[#cdc6e0]"), 0], ["Clipped_popp", dot("bg-[#b8413f]"), 1],
  ["majriver", ln("bg-[#f7d5da]"), 0], ["Buffered", sw("bg-[#85b66f]"), 1], ["swamp", sw("bg-[#17924f]"), 0],
  ["popp", dot("bg-[#e5647f]"), 0], ["airports", <Pencil key="p" s={16} />, 0], ["Clipped", ln("bg-[#eadb9f]"), 1],
  ["mixed_trees", sw("bg-[#987db7]"), 0], ["evergreen", sw("bg-[#e15989]"), 0], ["deciduous", sw("bg-[#c43c39]"), 0],
  ["railroads", ln("bg-[#c9dcc0]"), 0], ["Clipped", sw("bg-[#c43c39]"), 1], ["buffer_railroads", sw("bg-[#e15989]"), 1],
  ["buffer_airports", sw("bg-[#987db7]"), 1], ["regions", sw("bg-[#91522d]"), 0, 1], ["trees", <Poly key="p" />, 0],
];

function Layers() {
  return (
    <div className="flex min-h-0 flex-1 flex-col">
      <div className="flex h-[4px] justify-center"><Dots /></div>
      <div className="flex h-[25px] items-center justify-between pl-[3px] pr-[2px]"><span>Layers</span><FloatClose /></div>
      <div className="flex h-[27px] items-center pb-[5px] pl-[8px]">
        <I s={16} className="mr-[9px]"><path d="M13 9l8-8 2 3-7 8z" fill="#c98a2e" /><path d="M2 10l9-3 7 7-4 8c-5-1-10-4-12-12z" fill="#f1d25a" stroke="#b79c1a" /><path d="M2 10c2 6 6 10 12 12l1-3C9 16 6 12 5 9z" fill="#4d87cf" /><path d="M8 8l9 7" stroke="#d33" strokeWidth="3" /></I>
        <I s={16} className="mr-[9px]"><rect x="1" y="8" width="13" height="14" fill="#fff" stroke="#777" /><rect x="4" y="5" width="13" height="14" fill="#fff" stroke="#777" /><rect x="7" y="3" width="14" height="14" fill="#eee" stroke="#777" /><path d="M12.500 0v15" stroke="#3f74b0" strokeWidth="3" /><rect x="15" y="15" width="8" height="8" fill="#8cc08c" stroke="#5a9e5f" /></I>
        <div className="relative mr-[9px]"><I s={16}><path d="M1 12c6-10 16-10 22 0-6 8-16 8-22 0z" fill="#fff" stroke="#888" strokeWidth="1.500" /><circle cx="12" cy="11" r="5" fill="#5f8cc0" /><circle cx="12" cy="11" r="2" fill="#222" /></I><span className="absolute -bottom-[1px] -right-[2px]"><Tri s={5} /></span></div>
        <div className="relative mr-[9px]"><Funnel /><span className="absolute -bottom-[1px] -right-[2px]"><Tri s={5} /></span></div>
        <div className="relative w-4"><span className="-mt-[3px] block text-[17px] leading-4 text-[#6a3b7d]">ε</span><span className="absolute -bottom-[1px] -right-[1px]"><I s={9}><path d="M2 3h20v4l-6 6v9H9v-9L2 7z" fill="#aaa" /></I></span></div>
        <span className="mx-[6px]"><Tri /></span>
        <span className="ml-[2px]"><TreeArrow /></span><span className="ml-[9px]"><TreeArrow up /></span>
        <I s={16} className="ml-[9px]"><rect x="2" y="1" width="18" height="19" fill="#f6f6f6" stroke="#777" strokeWidth="1.500" /><rect x="14" y="15.500" width="10" height="6" rx="2" fill="#e0454b" /><path d="M16.500 18.500h5" stroke="#fff" strokeWidth="1.300" /></I>
      </div>
      <div className="flex-1 overflow-hidden border border-[#b4b4b4] bg-white">
        {LAYERS.map(([n, ic, t, on], i) => (
          <div key={i} className={"flex h-[18px] items-center pr-[4px] " + (i === 0 ? "bg-[#efefef]" : "")}>
            <span className="flex w-[23px] justify-center">{n === "trees" && <span className="-ml-1"><Tri d="right" /></span>}</span>
            <Check on={on} />
            <span className="ml-[6px] flex w-4 items-center">{ic}</span>
            <span className={"ml-[6px] mt-[1px] flex-1 whitespace-nowrap font-bold " + (on ? "tracking-normal " : "italic tracking-[0.15px] text-[#7b7b7b] ") + (i === 0 ? "underline" : "")}>{n}</span>
            {t ? <span className="flex h-4 w-[17px] items-center justify-center border border-[#e2e2e2] bg-[#fafafa]"><Temp /></span> : null}
          </div>
        ))}
      </div>
    </div>
  );
}

const TOOLS = [
  ["Remove duplicate vertices", "pl-[44px]", "", <Gear key="g" s={15} hole="#c4d8ef" r={2.5} />, "h-[18px]"],
  ["Remove null geometries", "pl-[44px]", "", <Gear key="g" s={15} hole="#c4d8ef" r={2.5} />, "h-[18px]"],
  ["Vector table", "pl-[10px]", "down", <Q key="g" s={15} />, "h-[18px]"],
  ["Drop field(s)", "pl-[44px]", "", <Gear key="g" s={15} hole="#c4d8ef" r={2.5} />, "h-[18px]"],
  ["Retain fields", "pl-[44px]", "", <Gear key="g" s={15} hole="#c4d8ef" r={2.5} />, "h-[18px]"],
  ["GRASS", "pl-[10px]", "down", <Grass key="g" />, "h-[18px]"],
  ["Vector (v.*)", "pl-[31px]", "down", null, "h-[13px]"],
  ["v.outlier", "pl-[62px]", "", <Grass key="g" />, "h-[18px]"],
];

function RightDock() {
  return (
    <div className="flex w-[248px] shrink-0 flex-col overflow-hidden">
      <div className="flex h-[22px] shrink-0 items-center pl-[4px]"><span className="w-[226px] shrink-0">Processing Toolbox</span><FloatClose /></div>
      <div className="flex h-[29px] shrink-0 items-center pb-[2px] pl-[9px]">
        <div className="relative mr-[9px]"><I s={17}><g transform="scale(.62)"><path d="M12 1v22M1 12h22M4 4l16 16M20 4L4 20" stroke="#c9252b" strokeWidth="4" /><circle cx="12" cy="12" r="3" fill="#eee" /></g><circle cx="19" cy="12" r="3" stroke="#888" strokeWidth="2.500" /><circle cx="11" cy="20" r="3" stroke="#7ba3d6" strokeWidth="2.500" /></I><span className="absolute -bottom-[2px] -right-[3px]"><Tri s={5} /></span></div>
        <div className="relative mr-[9px]"><Python s={15} /><span className="absolute -bottom-[2px] -right-[4px]"><Tri s={5} /></span></div>
        <I s={16} className="mr-[4px]"><circle cx="12" cy="12" r="10.500" fill="#f2f2f2" stroke="#777" strokeWidth="1.500" /><path d="M12 4v8l5 4" stroke="#555" strokeWidth="1.600" /></I>
        <div className="flex h-[23px] w-[24px] items-center justify-center rounded-[3px] border border-[#a9a9a9] bg-[#d9d9d9]"><I s={16}><path d="M4 1h12l4 4v18H4z" fill="#fff" stroke="#888" /><path d="M7 9h8M7 12h10M7 15h8M7 18h10" stroke="#888" strokeWidth="1.500" /></I></div>
        <Sep w="w-[11px]" />
        <I s={16} className="mx-[2px]"><path d="M1 2h17v14l-4 4H1z" fill="#f9e23c" stroke="#c4a000" /><path d="M20 7l3 2-7 12-3 1 .5-4z" fill="#ddc98a" stroke="#777" /></I>
        <Sep w="w-[13px]" />
        <Wrench s={17} />
      </div>
      <div className="flex h-[22px] w-[260px] shrink-0 items-center rounded-[3px] border border-[#b0b0b0] bg-white pl-[8px]"><Loupe s={13} /><span className="ml-[7px] flex-1">remov</span><span className="mr-[7px] flex h-[10px] w-[20px] items-center bg-[#888] pl-[5px] [clip-path:polygon(25%_0,100%_0,100%_100%,25%_100%,0_50%)]"><I s={8}><path d="M3 3l18 18M21 3L3 21" stroke="#fff" strokeWidth="3.500" /></I></span></div>
      <div className="flex h-[142px] w-[258px] shrink-0 border border-[#b4b4b4] bg-white">
        <div className="flex-1 overflow-hidden">
          {TOOLS.map(([n, pl, a, ic, h]) => (
            <div key={n} className={"flex items-center whitespace-nowrap " + pl + " " + h}>
              {a ? <span className={(ic ? "mr-[9px]" : "mr-[8px]") + " -ml-1"}><Tri d={a} /></span> : null}{ic}<span className={ic ? "ml-[6px]" : "-ml-[1px]"}>{n}</span>
            </div>
          ))}
        </div>
        <VScroll thumb={<div className="h-[48px] border-b border-[#b4b4b4]" />} />
      </div>
      <div className="flex h-[5px] shrink-0 items-center pl-[120px]"><Dots /></div>
      <div className="flex h-[19px] shrink-0 items-center pl-[4px] pt-[1px]"><span className="w-[226px] shrink-0">Results Viewer</span><FloatClose /></div>
      <div className="h-[301px] w-[260px] shrink-0 border border-[#b4b4b4] bg-white" />
      <div className="flex h-[4px] shrink-0 items-center pl-[120px]"><Dots /></div>
      <div className="w-[260px] flex-1 border border-[#b4b4b4] bg-white" />
    </div>
  );
}

/* ---------- attribute table window ---------- */
function AttributeWindow() {
  const cell = "flex h-full w-[100px] shrink-0 items-center border-r border-[#c4c4c4] px-[3px]";
  return (
    <div className="absolute left-[951px] top-[593px] flex h-[360px] w-[618px] flex-col overflow-hidden rounded-lg border border-[#a8a8a8] bg-[#f0f0f0] shadow-[0_14px_36px_rgba(0,0,0,0.34)]">
      <div className="flex h-[28px] shrink-0 items-center bg-[#f3f3f3] pl-[7px] font-['Open_Sans'] text-[12px] tracking-normal text-[#888]"><Q s={17} /><span className="ml-[6px]">S</span></div>
      <div className="flex h-[32px] shrink-0 items-center gap-[10px] pl-[5px]"><Pencil s={17} /><span className="opacity-30"><Floppy s={15} /></span></div>
      <div className="flex h-[269px] shrink-0 border-y border-[#b4b4b4] bg-[#f0f0f0]">
        <div className="flex flex-1 flex-col overflow-hidden">
          <div className="h-[17px] shrink-0 border-b border-[#b4b4b4] bg-gradient-to-b from-[#fafafa] to-[#ececec]" />
          {[1, 2, 3, 4, 5, 6, 7, 8, 9].map((r) => (
            <div key={r} className="flex h-[30px] shrink-0">
              <div className="flex w-[18px] shrink-0 items-center border-b border-r border-[#b4b4b4] bg-[#f4f4f4] pl-[1px]">{r < 9 ? r : ""}</div>
              <div className={"flex w-[501px] border-b border-[#c4c4c4] " + (r % 2 ? "bg-white" : "bg-[#e9e7e3]")}>
                <div className={cell + " justify-end"}>{r === 8 ? "8" : ""}</div>
                <div className={cell + " justify-end"}>{r === 8 ? "8" : ""}</div>
                <div className={cell}>{r === 8 ? "Marsh/Swamp" : ""}</div>
                <div className={cell}>{r === 8 ? "BH095" : ""}</div>
                <div className={cell + " justify-end"}>{r === 8 ? "207,046" : ""}</div>
              </div>
            </div>
          ))}
        </div>
        <VScroll thumb={null} />
      </div>
      <div className="flex flex-1 items-center justify-between pl-[2px] pr-[3px]">
        <div className="relative flex h-[23px] w-[121px] items-center gap-[2px] rounded-[3px] border border-[#b0b0b0] bg-gradient-to-b from-white to-[#ececec] pl-[2px] tracking-[-0.15px]"><TableIc s={15} />Show All Features<span className="absolute bottom-0 right-[2px]"><Tri s={5} /></span></div>
        <div className="flex items-center gap-[4px]">
          <I s={16}><rect x="1" y="2" width="22" height="20" fill="#dfeaf6" stroke="#7ba3d0" /><path d="M4 6h4M4 11h4M4 16h4M11 5h8v5h-8zM11 14h8v5h-8z" stroke="#5e88b8" strokeWidth="1.500" /></I>
          <span className="flex h-[23px] w-[24px] items-center justify-center rounded-[3px] border border-[#a9a9a9] bg-[#d6d6d6]"><TableIc s={16} /></span>
        </div>
      </div>
    </div>
  );
}

/* ---------- field calculator ---------- */
const BTN = "flex items-center justify-center rounded-[3px] border bg-gradient-to-b from-[#fefefe] to-[#eeeeee] ";
const GROUPS = ["Aggregates", "Arrays", "Color", "Conditionals", "Conversions", "Date and Time", "Fields and Values", "Files and Paths", "Fuzzy Matching", "General", "Geometry", "Map Layers", "Maps", "Math", "Operators", "Rasters"];

function Calculator() {
  return (
    <div className="absolute left-[989px] top-[225px] flex h-[656px] w-[682px] flex-col overflow-hidden rounded-lg border border-[#a0a0a0] bg-[#f0f0f0] shadow-[0_18px_44px_rgba(0,0,0,0.42)]">
      <div className="flex h-[30px] shrink-0 items-center justify-between bg-[#f3f3f3] pb-px pl-[7px] pr-[9px]">
        <span className="flex items-center font-['Open_Sans'] text-[11.5px] tracking-normal"><Q s={17} /><span className="ml-[5px]">Simplified — Field Calculator</span></span>
        <I s={12}><path d="M2 2l20 20M22 2L2 22" stroke="#222" strokeWidth="2.200" /></I>
      </div>
      <div className="flex h-[168px] shrink-0 flex-col pl-[10px]">
        <div className="mt-[12px] flex h-[16px] items-center gap-[4px] text-[#868686]"><Check off /><span className="mt-[2px] tracking-[-0.15px]">Only update 0 selected features</span></div>
        <div className="mt-[7px] flex font-bold tracking-normal">
          <div className="flex w-[313px] items-center gap-[5px]"><Check on /><span className="mt-[4px] leading-[13px]">Create a new field</span></div>
          <div className="flex items-center gap-[5px]"><Check /><span className="mt-[4px] leading-[13px]">Update existing field</span></div>
        </div>
        <div className="mt-[1px] flex gap-[7px]">
          <div className="flex h-[110px] w-[307px] shrink-0 flex-col rounded-[2px] border border-[#d6d6d6] bg-[#ececec] pl-[4px]">
            <div className="mt-[12px] flex h-[16px] shrink-0 items-center gap-[4px]"><Check /><span className="mt-[1px]">Create virtual field</span></div>
            <div className="mt-[5px] flex h-[22px] shrink-0 items-center"><span className="w-[96px]">Output field name</span><span className="h-[22px] w-[199px] rounded-[3px] border border-[#b0b0b0] bg-white" /></div>
            <div className="mt-[3px] flex h-[24px] shrink-0 items-center"><span className="w-[96px]">Output field type</span>
              <span className="flex h-[24px] w-[199px] items-center justify-between rounded-[3px] border border-[#b0b0b0] bg-gradient-to-b from-white to-[#eee] pl-[5px] pr-[7px]"><span className="flex items-center gap-[3px]"><b className="mb-[2px] text-[9px] tracking-[-0.4px] text-[#555]">123</b>Whole Number (integer)</span><Tri /></span></div>
            <div className="mt-[4px] flex h-[19px] shrink-0 items-center"><span className="w-[96px] whitespace-nowrap">Output field length</span><Spin v="10" w="w-[68px]" h="h-[19px]" upOff /><span className="w-[63px] pl-[5px]">Precision</span><Spin v="3" w="w-[68px]" h="h-[19px]" off /></div>
          </div>
          <div className="flex h-[110px] w-[346px] shrink-0 items-center justify-center rounded-[2px] border border-[#d6d6d6] bg-[#ececec] pt-[6px]"><span className="flex h-[24px] w-[334px] items-center justify-end rounded-[3px] border border-[#c4c4c4] bg-gradient-to-b from-white to-[#ececec] pr-[7px]"><Tri c="#aaa" /></span></div>
        </div>
      </div>
      <div className="flex h-[25px] shrink-0 items-end pl-[10px] pr-[11px]">
        <div className="flex h-[24px] w-[77px] items-center justify-center rounded-t-[3px] border border-b-0 border-[#a9a9a9] bg-white">Expression</div>
        <div className="-ml-px flex h-[22px] w-[96px] items-center justify-center border border-[#b4b4b4] bg-[#e9e9e9]">Function Editor</div>
        <div className="h-px flex-1 bg-[#b4b4b4]" />
      </div>
      <div className="flex h-[300px] shrink-0 items-start pl-[19px] pt-[10px]">
        <div className="flex w-[225px] flex-col">
          <div className="flex gap-[2px]">
            <span className={BTN + "h-[23px] w-[24px] border-[#b0b0b0]"}><I s={17}><path d="M5 1h10l4 4v18H5z" fill="#fff" stroke="#888" /></I></span>
            <span className={BTN + "h-[23px] w-[24px] border-[#b0b0b0]"}><Floppy s={16} /></span>
            <span className={BTN + "h-[23px] w-[24px] border-[#d0d0d0]"}><span className="opacity-30 grayscale"><I s={16}><path d="M4 2h14v20H4z" fill="#fff" stroke="#555" /><path d="M19 4l3 2-9 13-3 1z" fill="#aaa" stroke="#555" /></I></span></span>
            <span className={BTN + "h-[23px] w-[24px] border-[#d0d0d0]"}><span className="opacity-30"><I s={16}><path d="M5 7h14v15H5zM2 5h20M9 2h6M9 10v9M12 10v9M15 10v9" stroke="#a55" strokeWidth="1.500" /></I></span></span>
            <span className={BTN + "h-[23px] w-[24px] border-[#b0b0b0]"}><I s={17}><path d="M1 16h6c0 4 10 4 10 0h6v6H1z" fill="#5f8cc0" stroke="#3c6491" /><path d="M12 16l5-6h-3V1h-4v9H7z" fill="#3f74b0" stroke="#2f5b8c" strokeWidth=".6" /></I></span>
            <span className={BTN + "h-[23px] w-[24px] border-[#b0b0b0]"}><I s={17}><path d="M1 16h6c0 4 10 4 10 0h6v6H1z" fill="#5f8cc0" stroke="#3c6491" /><path d="M12 0l6 7h-4v10h-4V7H6z" fill="#f1e52a" stroke="#a59a10" /></I></span>
          </div>
          <div className="mt-[6px] h-[180px] shrink-0 border border-[#b4b4b4] bg-white p-px"><div className="flex h-[18px] items-center bg-[#efefef] font-['Liberation_Mono'] text-[13px] tracking-[0.05px] text-[#4d78bb]"><span className="text-[#666]">$</span>area</div></div>
          <div className="mt-[5px] flex justify-between">
            {["=", "+", "-", "/", "*", "^", "||", "(", ")", "'\\n'"].map((o) => <span key={o} className={BTN + "h-[22px] w-[21px] border-[#b4b4b4]"}>{o}</span>)}
          </div>
          <div className="mt-[8px] flex h-[23px] items-center"><span className="w-[44px]">Feature</span>
            <span className="flex h-[22px] w-[121px] rounded-[3px] border border-[#b0b0b0] bg-white"><span className="flex flex-1 items-center pl-[3px]">Marsh/Swamp</span><span className="flex w-[20px] items-center justify-center border-l border-[#b0b0b0] bg-[#f8f8f8]"><Tri /></span></span>
            <span className={BTN + "ml-[6px] h-[23px] w-[24px] border-[#d0d0d0]"}><I s={15}><path d="M18 1v22L5 12z" fill="#ddd" stroke="#bbb" strokeWidth="1.500" /></I></span>
            <span className={BTN + "ml-[6px] h-[23px] w-[24px] border-[#b0b0b0]"}><I s={15}><path d="M6 1v22l13-11z" fill="#6893c4" stroke="#3c6491" strokeWidth="1.500" /></I></span>
          </div>
          <div className="mt-[5px] flex h-[15px] items-center"><span className="w-[48px]">Preview:</span>1264562412,6410716</div>
        </div>
        <div className="flex h-[290px] w-[22px] items-center justify-center"><Dots v /></div>
        <div className="flex w-[140px] flex-col">
          <div className="flex gap-[6px]">
            <span className="flex h-[22px] w-[54px] items-center gap-[6px] rounded-[3px] border border-[#b0b0b0] bg-white pl-[8px] text-[#8a8a8a]"><Loupe s={13} />Se...</span>
            <span className={BTN + "h-[21px] w-[80px] border-[#b8b8b8] text-[#808080]"}>Show Help</span>
          </div>
          <div className="mt-[6px] flex h-[259px] border border-[#b4b4b4] bg-white">
            <div className="flex-1 overflow-hidden pt-px">
              {["feature", "geometry", "id", "row_number"].map((n) => <div key={n} className="flex h-[13px] items-center pl-[23px] font-bold tracking-normal">{n}</div>)}
              {GROUPS.map((n) => (
                <div key={n} className="flex h-[13px]"><span className="flex w-[20px] items-center justify-center"><Tri d="right" s={7} /></span><span className="flex flex-1 items-center whitespace-nowrap bg-[#c0c0c0] pl-[3px]">{n}</span></div>
              ))}
            </div>
            <VScroll thumb={<div className="h-[180px] border-b border-[#b4b4b4] bg-[#f8f8f8]" />} />
          </div>
        </div>
        <div className="flex h-[290px] w-[13px] items-center justify-center"><Dots v /></div>
        <div className="h-[287px] w-[241px] shrink-0 border border-[#b4b4b4] bg-white" />
      </div>
      <div className="mt-[36px] flex shrink-0 pl-[19px]">
        <svg width="34" height="36" viewBox="0 0 34 36"><path d="M17 2c9 0 15 6 15 13s-5 11-11 12l-1 8-7-8C7 25 4 20 4 15 4 8 9 2 17 2z" fill="#999" /><path d="M15 .5c8 0 14 6 14 13s-5 11-11 12l-1 8-5-8C6 24 1 20 1 13.500 1 6 7 .5 15 .5z" fill="#fff" stroke="#555" /><circle cx="15" cy="6.500" r="2.800" fill="#0000e0" /><path d="M11 11h6v9h2.500v2h-9v-2H13v-7h-2z" fill="#0000e0" /></svg>
        <div className="ml-[35px] mt-[4px] w-[560px] leading-[13px]">You are editing information on this layer but the layer is currently not in edit mode. If you click OK, edit mode will<br />automatically be turned on.</div>
      </div>
      <div className="mt-[27px] flex gap-[6px] pl-[417px]">
        <span className={BTN + "h-[22px] w-[80px] border-[#c8c8c8] text-[#999]"}>OK</span>
        <span className={BTN + "h-[22px] w-[80px] border-[#b0b0b0]"}>Anuluj</span>
        <span className={BTN + "h-[22px] w-[80px] border-[#b0b0b0]"}>Pomoc</span>
      </div>
    </div>
  );
}

/* ---------- app ---------- */
const MENU = [["", "P", "roject", "w-[48px]"], ["", "E", "dit", "w-[32px]"], ["", "V", "iew", "w-[36px]"], ["", "L", "ayer", "w-[41px]"], ["", "S", "ettings", "w-[53px]"], ["", "P", "lugins", "w-[47px]"], ["Vect", "o", "r", "w-[45px]"], ["", "R", "aster", "w-[46px]"], ["", "D", "atabase", "w-[60px]"], ["", "W", "eb", "w-[36px]"], ["", "M", "esh", "w-[39px]"], ["SCP", "", "", "w-[33px]"], ["Pro", "c", "essing", "w-[65px]"], ["", "H", "elp", "w-[40px]"]];

export default function App() {
  return (
    <div className="relative flex h-[1032px] w-[1911px] flex-col overflow-hidden bg-[#f0f0f0] font-['DejaVu_Sans_Condensed','DejaVu_Sans',sans-serif] text-[11px] leading-[14px] tracking-[-0.2px] text-black">
      <div className="flex h-[23px] shrink-0 items-center bg-[#f3f3f3] pl-[2px] pr-[2px] font-['Open_Sans'] text-[11.3px] tracking-[-0.05px] text-[#858585]">
        <Q s={17} /><span className="ml-[6px] flex-1">*Untitled Project — QGIS</span>
        <svg width="112" height="14" viewBox="0 0 112 14" fill="none" stroke="#777" strokeWidth="1" className="mb-[2px]"><path d="M4 7.500h10M94.500 2l10 10M104.500 2l-10 10" /><rect x="48.500" y="4.500" width="6" height="7" rx="1" /><path d="M50.500 2.500h5a1 1 0 0 1 1 1v6" /></svg>
      </div>
      <div className="flex h-[18px] shrink-0 items-center border-b border-[#d5d5d5] bg-[#efefef] pl-[9px] pt-[2px] tracking-[-0.08px] text-[#8d8d8d]">
        {MENU.map(([a, b, c, w]) => <span key={a + b + c} className={w}>{a}<u className="underline-offset-2">{b}</u>{c}</span>)}
      </div>
      <Toolbar1 /><Toolbar2 /><Toolbar3 />
      <div className="flex min-h-0 flex-1 pt-px">
        <div className="flex w-[291px] shrink-0 flex-col"><Browser /><Layers /></div>
        <div className="flex w-[6px] shrink-0 items-center justify-center"><Dots v /></div>
        <div className="flex w-[1361px] shrink-0 flex-col overflow-hidden border border-[#b4b4b4]">
          <div className="flex h-[29px] shrink-0 items-center border border-[#8fa889] bg-[#dff0d8] pl-[8px] pr-[21px]">
            <svg width="24" height="18" viewBox="0 0 24 18"><path d="M1 3l4 2 3 5C12 5 17 3 23 1 16 6 11 11 7 17z" fill="#2fd62f" stroke="#0d7a0d" /></svg>
            <span className="ml-[10px] flex-1 tracking-[-0.08px]"><b className="tracking-normal">Layer Exported:</b> Successfully saved vector layer to <span className="text-[#0d7a0d] underline">E:\qgis_cw4\mixed_trees.shp</span></span>
            <I s={17} className="-mt-[3px]"><circle cx="12" cy="12" r="11.500" fill="#333" /><path d="M7.500 7.500l9 9M16.500 7.500l-9 9" stroke="#fff" strokeWidth="2.800" /></I>
          </div>
          <MapCanvas />
        </div>
        <div className="w-[5px] shrink-0" />
        <RightDock />
      </div>
      <div className="flex h-[28px] shrink-0 items-center pt-[1px]">
        <div className="ml-[4px] flex h-[21px] w-[200px] items-center rounded-[3px] border border-[#b0b0b0] bg-white pl-[8px] text-[#8a8a8a]"><Loupe s={13} /><span className="ml-[6px] tracking-[0.1px]">Type to locate (Ctrl+K)</span></div>
        <span className="ml-[7px] w-[906px] shrink-0 tracking-[-0.08px]">Toggles the editing state of the current layer</span>
        <span className="w-[57px] shrink-0">Coordinate</span>
        <div className="flex h-[21px] w-[105px] shrink-0 items-center justify-center whitespace-pre rounded-[3px] border border-[#b0b0b0] bg-white">1907698  4411941</div>
        <I s={16} className="ml-[4px]"><path d="M3 8l8-6 9 8-8 7z" fill="#777" stroke="#444" /><path d="M5 14l9 8 6-8M3 3l4 3M20 2l-3 4" stroke="#444" strokeWidth="2" /></I>
        <span className="ml-[12px] w-[29px] shrink-0">Scale</span>
        <div className="flex h-[21px] w-[81px] shrink-0 rounded-[3px] border border-[#b0b0b0] bg-white"><span className="flex flex-1 items-center pl-[3px]">1:2893229</span><span className="flex w-[18px] items-center justify-center border-l border-[#b0b0b0]"><Tri /></span></div>
        <I s={16} className="ml-[9px]"><rect x="4" y="10" width="16" height="13" rx="2" fill="#555" /><path d="M7.500 10V6c0-5 9-5 9 0v4" stroke="#666" strokeWidth="2.500" /></I>
        <span className="ml-[6px] w-[49px] shrink-0">Magnifier</span>
        <Spin v="100%" w="w-[85px]" h="h-[21px]" />
        <span className="ml-[6px] w-[53px] shrink-0">Rotation</span>
        <Spin v="0,0 °" w="w-[84px]" h="h-[21px]" />
        <span className="ml-[7px]"><Check on /></span><span className="ml-[3px] w-[50px] shrink-0">Render</span>
        <I s={14}><circle cx="12" cy="12" r="10" fill="#999" stroke="#555" strokeWidth="2" /><path d="M2 12h20M12 2v20M6 4c4 5 4 11 0 16M18 4c-4 5-4 11 0 16" stroke="#eee" /></I>
        <span className="ml-[1px] w-[76px] shrink-0">EPSG:2964</span>
        <I s={16}><path d="M12 2c7 0 11 4 11 9s-4 9-11 9l-6 3 1-4C3 18 1 15 1 11c0-5 4-9 11-9z" fill="#555" /><path d="M6 11h2M11 11h2M16 11h2" stroke="#fff" strokeWidth="2.500" /></I>
      </div>
      <AttributeWindow />
      <Calculator />
    </div>
  );
}
